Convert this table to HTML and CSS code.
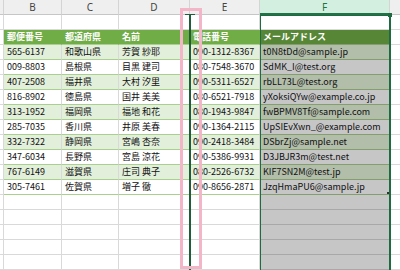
FILE: index.html
```html
<!DOCTYPE html>
<html lang="ja">
<head>
<meta charset="utf-8">
<link rel="stylesheet" href="styles.css">
</head>
<body>
<div class="sheet">
  <div class="row colhead">
    <div class="c"></div><div class="c">B</div><div class="c">C</div><div class="c">D</div><div class="c">E</div><div class="c sel">F</div><div class="c"></div>
  </div>
  <div class="row">
    <div class="c"></div><div class="c"></div><div class="c"></div><div class="c"></div><div class="c"></div><div class="c"></div><div class="c"></div>
  </div>
  <div class="row thead">
    <div class="c"></div><div class="c t">郵便番号</div><div class="c t">都道府県</div><div class="c t">名前</div><div class="c t">電話番号</div><div class="c t f">メールアドレス</div><div class="c"></div>
  </div>
  <div class="row band">
    <div class="c"></div><div class="c t">565-6137</div><div class="c t">和歌山県</div><div class="c t">芳賀 紗耶</div><div class="c t">090-1312-8367</div><div class="c t f">t0N8tDd@sample.jp</div><div class="c"></div>
  </div>
  <div class="row plain">
    <div class="c"></div><div class="c t">009-8803</div><div class="c t">島根県</div><div class="c t">目黒 建司</div><div class="c t">080-7548-3670</div><div class="c t f">SdMK_I@test.org</div><div class="c"></div>
  </div>
  <div class="row band">
    <div class="c"></div><div class="c t">407-2508</div><div class="c t">福井県</div><div class="c t">大村 汐里</div><div class="c t">090-5311-6527</div><div class="c t f">rbLL73L@test.org</div><div class="c"></div>
  </div>
  <div class="row plain">
    <div class="c"></div><div class="c t">816-8902</div><div class="c t">徳島県</div><div class="c t">国井 美美</div><div class="c t">080-6521-7918</div><div class="c t f">yXoksiQYw@example.co.jp</div><div class="c"></div>
  </div>
  <div class="row band">
    <div class="c"></div><div class="c t">313-1952</div><div class="c t">福岡県</div><div class="c t">福地 和花</div><div class="c t">080-1943-9847</div><div class="c t f">fwBPMV8Tf@sample.com</div><div class="c"></div>
  </div>
  <div class="row plain">
    <div class="c"></div><div class="c t">285-7035</div><div class="c t">香川県</div><div class="c t">井原 美春</div><div class="c t">090-1364-2115</div><div class="c t f">UpSIEvXwn_@example.com</div><div class="c"></div>
  </div>
  <div class="row band">
    <div class="c"></div><div class="c t">332-7322</div><div class="c t">静岡県</div><div class="c t">宮嶋 杏奈</div><div class="c t">090-2418-3484</div><div class="c t f">DSbrZj@sample.net</div><div class="c"></div>
  </div>
  <div class="row plain">
    <div class="c"></div><div class="c t">347-6034</div><div class="c t">長野県</div><div class="c t">宮島 涼花</div><div class="c t">090-5386-9931</div><div class="c t f">D3JBJR3m@test.net</div><div class="c"></div>
  </div>
  <div class="row band">
    <div class="c"></div><div class="c t">767-6149</div><div class="c t">滋賀県</div><div class="c t">庄司 典子</div><div class="c t">080-2526-6732</div><div class="c t f">KIF7SN2M@test.jp</div><div class="c"></div>
  </div>
  <div class="row plain">
    <div class="c"></div><div class="c t">305-7461</div><div class="c t">佐賀県</div><div class="c t">増子 徹</div><div class="c t">090-8656-2871</div><div class="c t f">JzqHmaPU6@sample.jp</div><div class="c"></div>
  </div>
  <div class="row empty">
    <div class="c"></div><div class="c"></div><div class="c"></div><div class="c"></div><div class="c"></div><div class="c f"></div><div class="c"></div>
  </div>
  <div class="row empty">
    <div class="c"></div><div class="c"></div><div class="c"></div><div class="c"></div><div class="c"></div><div class="c f"></div><div class="c"></div>
  </div>
  <div class="row empty">
    <div class="c"></div><div class="c"></div><div class="c"></div><div class="c"></div><div class="c"></div><div class="c f"></div><div class="c"></div>
  </div>
  <div class="row empty">
    <div class="c"></div><div class="c"></div><div class="c"></div><div class="c"></div><div class="c"></div><div class="c f"></div><div class="c"></div>
  </div>
  <div class="row empty">
    <div class="c"></div><div class="c"></div><div class="c"></div><div class="c"></div><div class="c"></div><div class="c f"></div><div class="c"></div>
  </div>

  <div class="selection"></div>
  <div class="handle"></div>
  <div class="corner"></div>
  <div class="insert-line"></div>
  <div class="insert-tick"></div>
  <div class="pink-box"></div>
</div>
</body>
</html>
```

FILE: styles.css
```css
* { box-sizing: border-box; }
html, body { margin: 0; padding: 0; background: #fff; overflow: hidden; }
.sheet {
  position: relative;
  width: 400px;
  height: 270px;
  overflow: hidden;
  font-family: "Noto Sans CJK JP", "Noto Sans", sans-serif;
  font-size: 9px;
  color: #111;
}
.row {
  display: grid;
  grid-template-columns: 4px 58px 57px 71px 70px 130px 20px;
  height: 15px;
}
.c {
  border-right: 1px solid #d9d9d9;
  border-bottom: 1px solid #d9d9d9;
  height: 15px;
  line-height: 14px;
  white-space: nowrap;
  overflow: hidden;
}
.t { padding-left: 3px; }
.colhead .c {
  background: #efefef;
  border-right-color: #d4d4d4;
  border-bottom-color: #c6c6c6;
  text-align: center;
  font-family: "Noto Sans", sans-serif;
  font-size: 10px;
  color: #444;
  line-height: 14px;
}
.colhead .c.sel {
  background: #d3efdf;
  color: #217346;
  border-bottom: 2px solid #217346;
}
.thead .t {
  background: #70ad47;
  color: #fff;
  font-weight: bold;
  border-right-color: #70ad47;
  border-bottom-color: #a9d08e;
}
.band .t { background: #e2efda; border-bottom-color: #a9d08e; }
.plain .t { background: #fff; border-bottom-color: #a9d08e; }
.thead .t.f { background: #578736; border-right-color: #578736; border-bottom-color: #839f6e; }
.band .t.f { background: #b2bdaa; border-bottom-color: #839f6e; }
.plain .t.f { background: #c6c6c6; border-bottom-color: #839f6e; }
.empty .c.f { background: #c6c6c6; border-bottom-color: #a8a8a8; }

.selection {
  position: absolute;
  left: 260px;
  top: 15px;
  width: 131px;
  height: 260px;
  border: 1px solid #1e6b41;
  border-right-width: 2px;
}
.handle {
  position: absolute;
  left: 388px;
  top: 13px;
  width: 4px;
  height: 4px;
  background: #1e6b41;
}
.corner {
  position: absolute;
  left: 387px;
  top: 192px;
  width: 2px;
  height: 2px;
  background: #333;
}
.insert-line {
  position: absolute;
  left: 189px;
  top: 14px;
  width: 2px;
  height: 260px;
  background: #1f5c3a;
}
.insert-tick {
  position: absolute;
  left: 185px;
  top: 14px;
  width: 10px;
  height: 1px;
  background: #1f5c3a;
}
.pink-box {
  position: absolute;
  left: 180px;
  top: 8px;
  width: 22px;
  height: 261px;
  border: 3px solid #f3b6c9;
}
```
